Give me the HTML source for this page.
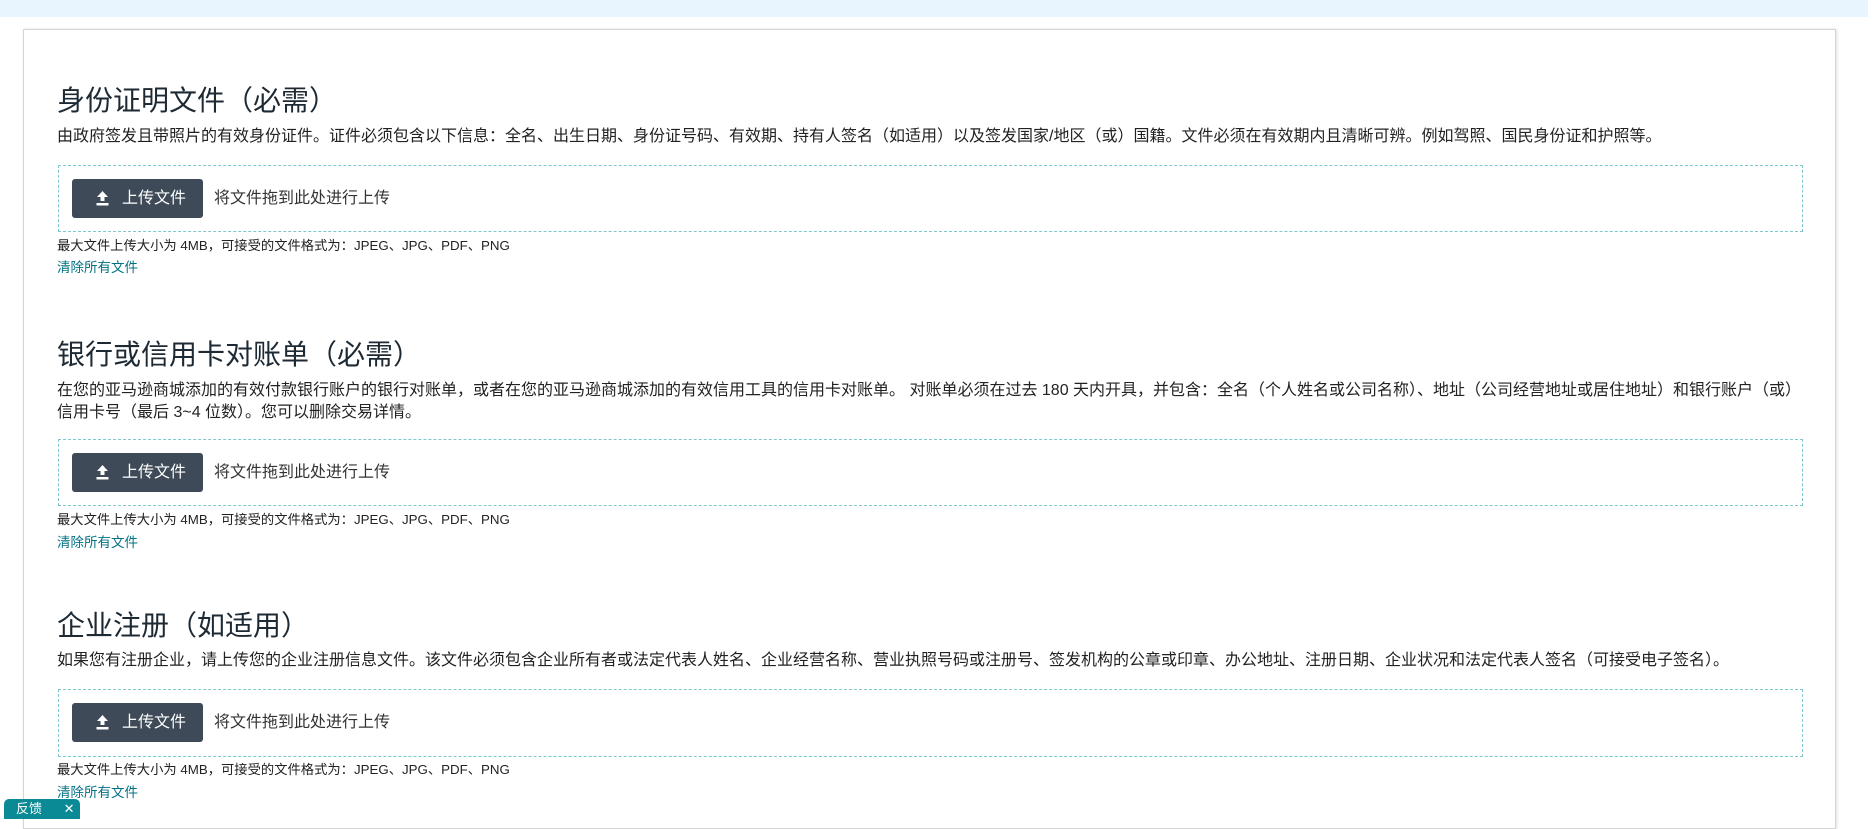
<!DOCTYPE html>
<html><head><meta charset="utf-8"><style>
*{margin:0;padding:0;box-sizing:border-box}
body{width:1874px;height:815px;overflow:hidden;background:#fff;font-family:"Liberation Sans","Noto Sans CJK SC",sans-serif;color:#0f1111;position:relative}
.band{position:absolute;left:0;top:0;width:1868px;height:17px;background:#e8f5fe}
.card{position:absolute;left:23px;top:29px;width:1813px;height:800px;border:1px solid #d5d5d5;box-shadow:1px 0 3px rgba(0,0,0,.12)}
.a{position:absolute;left:57px;white-space:nowrap}
.t{font-size:28px;color:#1e2a33;line-height:30px}
.d{font-size:16px;line-height:22px;color:#222}
.box{position:absolute;left:58px;width:1745px;border:1px dashed #7fc7ce}
.btn{position:absolute;left:13px;width:131px;height:39px;background:#3e4a57;border-radius:3px;color:#fff;font-size:16px;line-height:39px}
.btn svg{position:absolute;left:23px;top:12px}
.btn span{position:absolute;left:50px}
.drag{position:absolute;left:155px;font-size:16px;color:#333;line-height:39px}
.s{font-size:13.3px;color:#222;line-height:16px}
.l{font-size:13.5px;color:#007185;line-height:16px}
.fb{position:absolute;left:4px;top:799px;width:76px;height:20px;background:#0a8a94;border-radius:5px 5px 0 0;color:#fff;font-size:13px;line-height:20px;padding-left:12px}
</style></head><body>
<div class="band"></div>
<div class="card"></div>

<div class="a t" style="top:86px">身份证明文件（必需）</div>
<div class="a d" style="top:126px">由政府签发且带照片的有效身份证件。证件必须包含以下信息：全名、出生日期、身份证号码、有效期、持有人签名（如适用）以及签发国家/地区（或）国籍。文件必须在有效期内且清晰可辨。例如驾照、国民身份证和护照等。</div>
<div class="box" style="top:165px;height:67px"><div class="btn" style="top:13px"><svg width="15" height="15" viewBox="0 0 15 15"><path d="M7.5 0L13 6H9.5V10H5.5V6H2Z" fill="#fff"/><rect x="1.5" y="12" width="12" height="2.5" fill="#fff"/></svg><span>上传文件</span></div><div class="drag" style="top:13px">将文件拖到此处进行上传</div></div>
<div class="a s" style="top:238px">最大文件上传大小为 4MB，可接受的文件格式为：JPEG、JPG、PDF、PNG</div>
<div class="a l" style="top:260px">清除所有文件</div>

<div class="a t" style="top:340px">银行或信用卡对账单（必需）</div>
<div class="a d" style="top:380px">在您的亚马逊商城添加的有效付款银行账户的银行对账单，或者在您的亚马逊商城添加的有效信用工具的信用卡对账单。 对账单必须在过去 180 天内开具，并包含：全名（个人姓名或公司名称）、地址（公司经营地址或居住地址）和银行账户（或）<br>信用卡号（最后 3~4 位数）。您可以删除交易详情。</div>
<div class="box" style="top:439px;height:67px"><div class="btn" style="top:13px"><svg width="15" height="15" viewBox="0 0 15 15"><path d="M7.5 0L13 6H9.5V10H5.5V6H2Z" fill="#fff"/><rect x="1.5" y="12" width="12" height="2.5" fill="#fff"/></svg><span>上传文件</span></div><div class="drag" style="top:13px">将文件拖到此处进行上传</div></div>
<div class="a s" style="top:512px">最大文件上传大小为 4MB，可接受的文件格式为：JPEG、JPG、PDF、PNG</div>
<div class="a l" style="top:535px">清除所有文件</div>

<div class="a t" style="top:611px">企业注册（如适用）</div>
<div class="a d" style="top:650px">如果您有注册企业，请上传您的企业注册信息文件。该文件必须包含企业所有者或法定代表人姓名、企业经营名称、营业执照号码或注册号、签发机构的公章或印章、办公地址、注册日期、企业状况和法定代表人签名（可接受电子签名）。</div>
<div class="box" style="top:689px;height:68px"><div class="btn" style="top:13px"><svg width="15" height="15" viewBox="0 0 15 15"><path d="M7.5 0L13 6H9.5V10H5.5V6H2Z" fill="#fff"/><rect x="1.5" y="12" width="12" height="2.5" fill="#fff"/></svg><span>上传文件</span></div><div class="drag" style="top:13px">将文件拖到此处进行上传</div></div>
<div class="a s" style="top:762px">最大文件上传大小为 4MB，可接受的文件格式为：JPEG、JPG、PDF、PNG</div>
<div class="a l" style="top:785px">清除所有文件</div>

<div class="fb">反馈 <span style="margin-left:18px">✕</span></div>
</body></html>
